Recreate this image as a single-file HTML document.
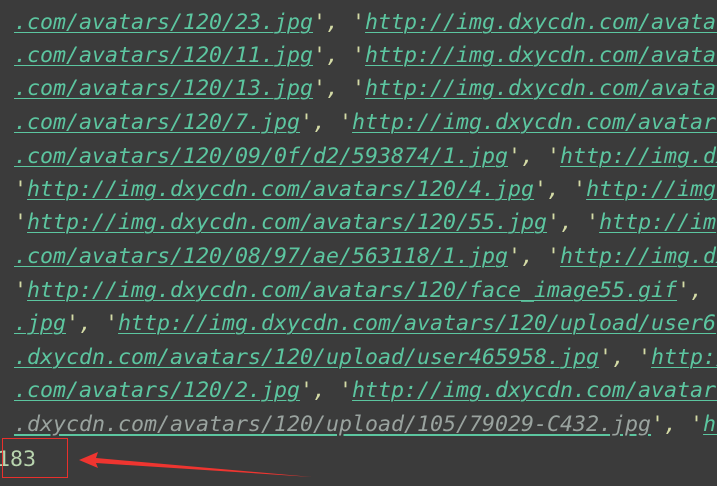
<!DOCTYPE html>
<html><head><meta charset="utf-8"><style>
html,body{margin:0;padding:0;width:717px;height:486px;overflow:hidden}
body{background:#3b3b3b;position:relative}
.l{position:absolute;left:14px;white-space:pre;font-family:"DejaVu Sans Mono","Liberation Mono",monospace;font-style:italic;font-size:21.6px;line-height:26px;color:#d4dba6}
.u{color:#5cc6a0;text-decoration:underline;text-underline-offset:3px;text-decoration-thickness:1px}
.g{color:#9aa39f;text-decoration:underline;text-decoration-color:#5cc6a0;text-underline-offset:3px}
.n{position:absolute;left:-3px;top:447px;font-family:"DejaVu Sans Mono","Liberation Mono",monospace;font-size:21.6px;line-height:26px;color:#b8d4ae}
</style></head><body>
<div class="l" style="top:10px"><span class="u">.com/avatars/120/23.jpg</span>', '<span class="u">http://img.dxycdn.com/avatars/120/</span></div>
<div class="l" style="top:43px"><span class="u">.com/avatars/120/11.jpg</span>', '<span class="u">http://img.dxycdn.com/avatars/120/</span></div>
<div class="l" style="top:76px"><span class="u">.com/avatars/120/13.jpg</span>', '<span class="u">http://img.dxycdn.com/avatars/120/</span></div>
<div class="l" style="top:110px"><span class="u">.com/avatars/120/7.jpg</span>', '<span class="u">http://img.dxycdn.com/avatars/120/</span></div>
<div class="l" style="top:144px"><span class="u">.com/avatars/120/09/0f/d2/593874/1.jpg</span>', '<span class="u">http://img.dxycdn.com/</span></div>
<div class="l" style="top:177px">'<span class="u">http://img.dxycdn.com/avatars/120/4.jpg</span>', '<span class="u">http://img.dxycdn.com/</span></div>
<div class="l" style="top:210px">'<span class="u">http://img.dxycdn.com/avatars/120/55.jpg</span>', '<span class="u">http://img.dxycdn.com/</span></div>
<div class="l" style="top:244px"><span class="u">.com/avatars/120/08/97/ae/563118/1.jpg</span>', '<span class="u">http://img.dxycdn.com/</span></div>
<div class="l" style="top:278px">'<span class="u">http://img.dxycdn.com/avatars/120/face_image55.gif</span>', '<span class="u">http://img</span></div>
<div class="l" style="top:311px"><span class="u">.jpg</span>', '<span class="u">http://img.dxycdn.com/avatars/120/upload/user6</span></div>
<div class="l" style="top:345px"><span class="u">.dxycdn.com/avatars/120/upload/user465958.jpg</span>', '<span class="u">http://img</span></div>
<div class="l" style="top:378px"><span class="u">.com/avatars/120/2.jpg</span>', '<span class="u">http://img.dxycdn.com/avatars/120/</span></div>
<div class="l" style="top:412px"><span class="g">.dxycdn.com/avatars/120/upload/105/79029-C432.jpg</span>', '<span class="u">http://img</span></div>
<div class="n">183</div>
<div style="position:absolute;left:2px;top:438px;width:64px;height:38px;border:1px solid #e8302c"></div>
<svg style="position:absolute;left:0;top:0" width="717" height="486"><polygon points="79,460 98,452 96,458 312,477 96,463 98,468" fill="#ee3530"/></svg>
</body></html>
